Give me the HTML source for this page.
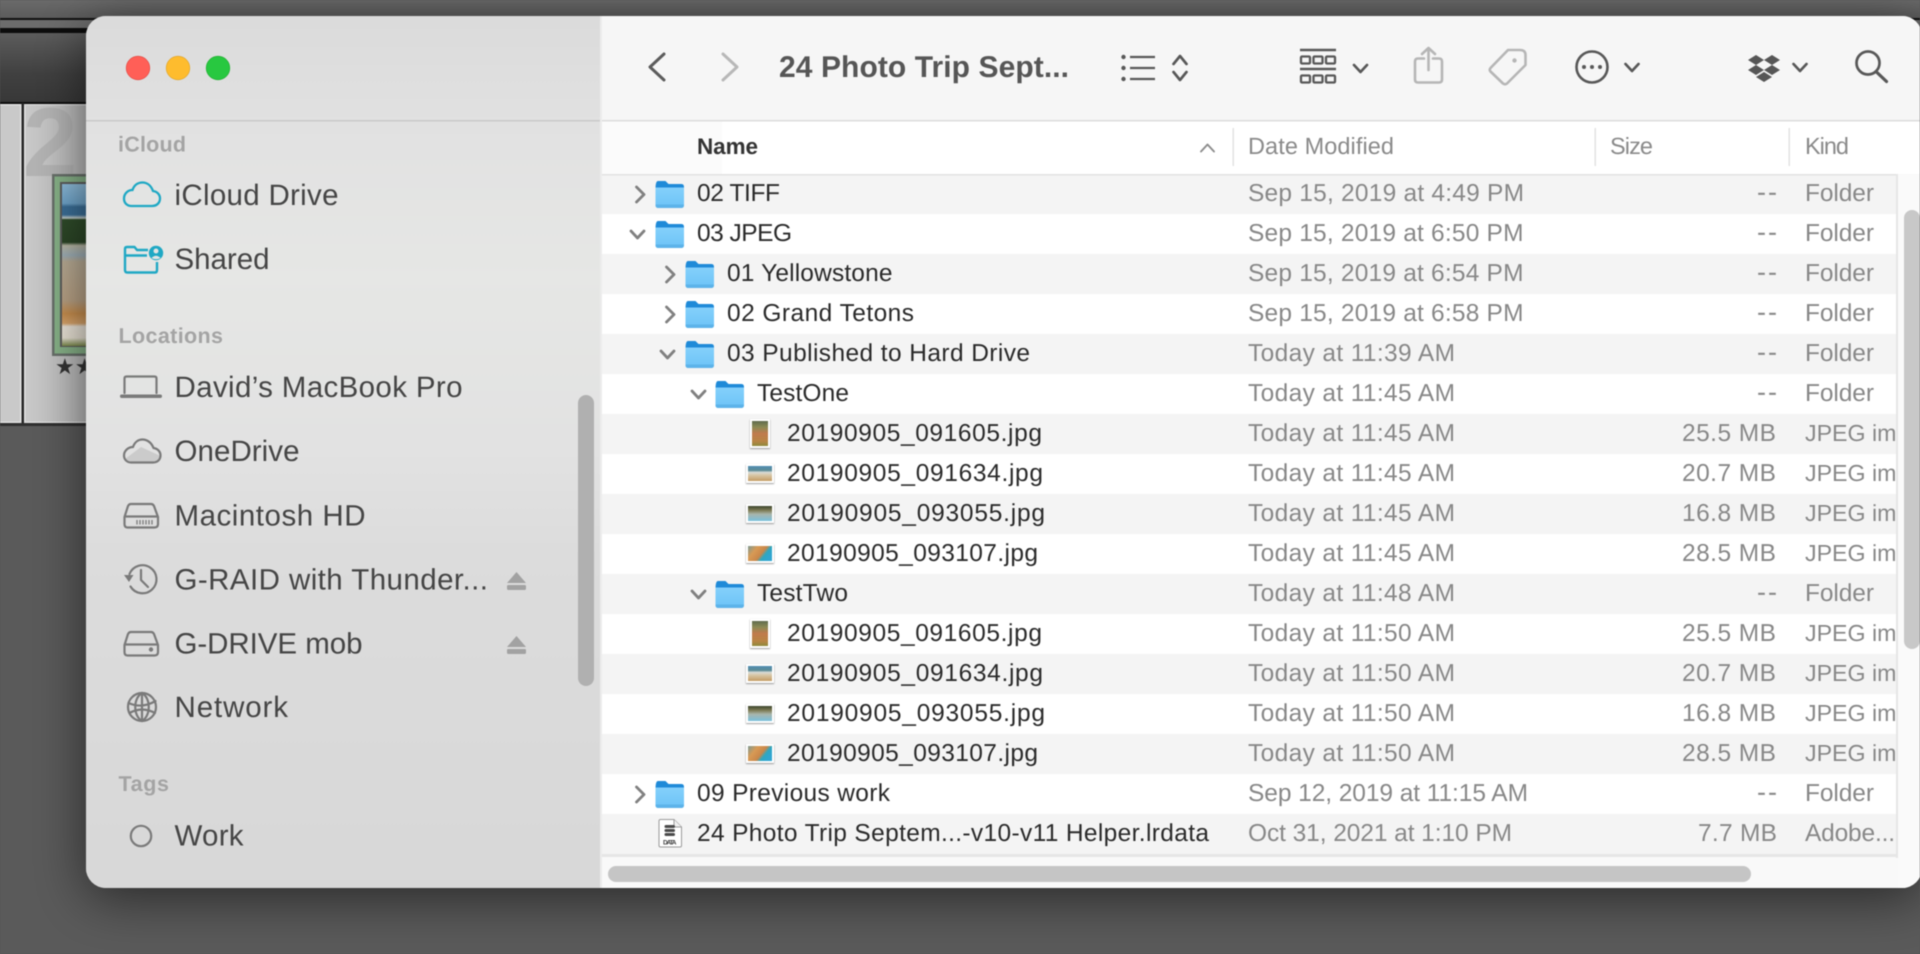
<!DOCTYPE html>
<html lang="en"><head><meta charset="utf-8"><title>Finder</title>
<style>
html,body{margin:0;padding:0;width:1920px;height:954px;overflow:hidden;background:#555}
svg{display:block;filter:blur(.45px)}
text{font-family:"Liberation Sans",sans-serif;text-rendering:geometricPrecision}
.s{font-size:29.5px;fill:#454545}
.h{font-size:21.5px;font-weight:700;fill:#a4a4a4}
.n{font-size:24.5px;fill:#2a2a2a}
.d{font-size:24.5px;fill:#888}
.q{font-size:27px;fill:#888}
.j{font-size:23.2px;fill:#888}
.c{font-size:23.5px;fill:#8a8a8a}
.ic{fill:none;stroke:#7a7a7a;stroke-width:2.2;stroke-linecap:round;stroke-linejoin:round}
.tb{fill:none;stroke:#585858;stroke-width:2.7;stroke-linecap:round;stroke-linejoin:round}
.tg{fill:none;stroke:#b6b6b6;stroke-width:2.6;stroke-linecap:round;stroke-linejoin:round}
.ch{fill:none;stroke:#808080;stroke-width:2.8;stroke-linecap:round;stroke-linejoin:round}
</style></head><body>
<svg width="1920" height="954" viewBox="0 0 1920 954" xmlns="http://www.w3.org/2000/svg">
<defs>
<linearGradient id="bar" x1="0" y1="0" x2="0" y2="1"><stop offset="0" stop-color="#5c5c5c"/><stop offset=".6" stop-color="#404040"/><stop offset="1" stop-color="#383838"/></linearGradient>
<linearGradient id="top" x1="0" y1="0" x2="0" y2="1"><stop offset="0" stop-color="#6a6a6a"/><stop offset="1" stop-color="#5c5c5c"/></linearGradient>
<linearGradient id="cell" x1="0" y1="0" x2="1" y2="0"><stop offset="0" stop-color="#cacaca"/><stop offset="1" stop-color="#b8b8b8"/></linearGradient>
<linearGradient id="side" x1="0" y1="0" x2="0" y2="1"><stop offset="0" stop-color="#dbdbdb"/><stop offset=".14" stop-color="#e2e2e2"/><stop offset=".3" stop-color="#e6e7e5"/><stop offset=".5" stop-color="#e2e2e2"/><stop offset=".62" stop-color="#dcdcdc"/><stop offset="1" stop-color="#d8d8d8"/></linearGradient>
<linearGradient id="ph" x1="0" y1="0" x2="0" y2="1">
<stop offset="0" stop-color="#8fbddc"/><stop offset=".12" stop-color="#6fa5cb"/><stop offset=".14" stop-color="#3b6f98"/><stop offset=".19" stop-color="#3b6f98"/><stop offset=".21" stop-color="#c8d2d0"/><stop offset=".22" stop-color="#2f4c2a"/><stop offset=".36" stop-color="#2b4526"/><stop offset=".38" stop-color="#b9b8a6"/><stop offset=".44" stop-color="#9fb0b8"/><stop offset=".48" stop-color="#b9ac95"/><stop offset=".72" stop-color="#b9a285"/><stop offset=".8" stop-color="#c98f4e"/><stop offset=".86" stop-color="#d9a56c"/><stop offset=".88" stop-color="#ece5da"/><stop offset=".95" stop-color="#e8e2d4"/><stop offset="1" stop-color="#7b8a4a"/></linearGradient>
<linearGradient id="fb" x1="0" y1="0" x2="0" y2="1"><stop offset="0" stop-color="#84d0fb"/><stop offset="1" stop-color="#6cc3f7"/></linearGradient>
<linearGradient id="t1" x1="0" y1="0" x2="0" y2="1"><stop offset="0" stop-color="#5e6b4e"/><stop offset=".25" stop-color="#8c8a55"/><stop offset=".5" stop-color="#c07a4c"/><stop offset=".8" stop-color="#b88444"/><stop offset="1" stop-color="#8f8a3c"/></linearGradient>
<linearGradient id="t2" x1="0" y1="0" x2="0" y2="1"><stop offset="0" stop-color="#4f8db3"/><stop offset=".3" stop-color="#5d8b94"/><stop offset=".42" stop-color="#d9dcd8"/><stop offset=".6" stop-color="#d8c7a8"/><stop offset="1" stop-color="#c49c63"/></linearGradient>
<linearGradient id="t3" x1="0" y1="0" x2="0" y2="1"><stop offset="0" stop-color="#3c452c"/><stop offset=".3" stop-color="#7f7d57"/><stop offset=".55" stop-color="#a8b5ac"/><stop offset="1" stop-color="#79c1dc"/></linearGradient>
<linearGradient id="t4" x1="0" y1="0" x2="1" y2=".5"><stop offset="0" stop-color="#7c9a94"/><stop offset=".35" stop-color="#d89a55"/><stop offset=".65" stop-color="#c9874a"/><stop offset=".8" stop-color="#2fa7c0"/><stop offset="1" stop-color="#30a5d0"/></linearGradient>
<filter id="wsh" x="-10%" y="-10%" width="120%" height="125%"><feDropShadow dx="0" dy="10" stdDeviation="26" flood-color="#000" flood-opacity=".55"/></filter>
<filter id="tsh" x="-30%" y="-30%" width="160%" height="160%"><feDropShadow dx="0" dy=".8" stdDeviation=".8" flood-color="#000" flood-opacity=".45"/></filter>
<clipPath id="win"><rect x="86" y="16" width="1836" height="872" rx="20"/></clipPath>
<clipPath id="kind"><rect x="1800" y="174" width="96" height="684"/></clipPath>
<clipPath id="shot"><rect x="0" y="0" width="86" height="954"/></clipPath>
<g id="f">
<path d="M0 8 Q0 0 2.500 0 H10 L13 3 H26 Q28.500 3 28.500 6 V10 H0Z" fill="#1f8ad8"/>
<path d="M0 6.500 H28.500 V24 Q28.500 27 25.500 27 H3 Q0 27 0 24Z" fill="url(#fb)"/>
<path d="M0 23.500 H28.500 V24 Q28.500 27 25.500 27 H3 Q0 27 0 24Z" fill="#5cb3ea"/>
</g>
<g id="thumbs">
<rect x="750" y="419" width="20" height="29" fill="#fff" filter="url(#tsh)"/><rect x="752" y="421" width="16" height="25" fill="url(#t1)"/>
<rect x="746" y="464" width="28" height="19" fill="#fff" filter="url(#tsh)"/><rect x="748" y="466" width="24" height="15" fill="url(#t2)"/>
<rect x="746" y="504" width="28" height="19" fill="#fff" filter="url(#tsh)"/><rect x="748" y="506" width="24" height="15" fill="url(#t3)"/>
<rect x="746" y="544" width="28" height="19" fill="#fff" filter="url(#tsh)"/><rect x="748" y="546" width="24" height="15" fill="url(#t4)"/>
</g>
<path id="hd" d="M131 1 H151 Q153 1 154 3 L158 14 V21 Q158 24.500 154.500 24.500 H127.500 Q124.500 24.500 124.500 21 V14 L128 3 Q129 1 131 1Z M125 13.500 H157.500"/>
<path id="cr" d="M0 -1 L7.500 6.500 L0 14" />
<path id="cd" d="M0 0 L6.500 7 L13 0" />
<path id="sc" d="M0 0 L6.500 7 L13 0" />
</defs>

<!-- background application -->
<rect width="1920" height="954" fill="#5a5a5a"/>
<rect width="1920" height="18" fill="url(#top)"/>
<rect y="18" width="1920" height="2" fill="#111"/>
<rect y="20" width="1920" height="8" fill="#6c6c6c"/>
<rect y="28" width="1920" height="5" fill="#0c0c0c"/>
<rect y="33" width="1920" height="69" fill="url(#bar)"/>
<rect y="102" width="1920" height="2" fill="#0d0d0d"/>
<g clip-path="url(#shot)">
<rect x="0" y="104" width="21" height="319" fill="#c9c9c9"/>
<rect x="20" y="104" width="1.500" height="319" fill="#e4e4e4"/>
<rect x="0" y="104" width="21" height="1.500" fill="#e0e0e0"/>
<rect x="0" y="421.500" width="21" height="1.500" fill="#e0e0e0"/>
<rect x="21.500" y="103" width="2.500" height="321" fill="#262626"/>
<rect x="24" y="104" width="62" height="319" fill="url(#cell)"/>
<rect x="24" y="104" width="1.500" height="319" fill="#e2e2e2"/>
<rect x="24" y="104" width="62" height="1.500" fill="#d8d8d8"/>
<rect x="24" y="421.500" width="62" height="1.500" fill="#dcdcdc"/>
<rect y="423" width="86" height="3" fill="#2f2f2f"/>
<text x="23" y="176" font-size="98" font-weight="700" fill="#b3b3b3">2</text>
<rect x="52" y="174" width="40" height="182" fill="#68706a"/>
<rect x="54.500" y="176.500" width="40" height="177" fill="#86b187"/>
<rect x="60" y="182" width="30" height="165" fill="#5c5c5c"/>
<rect x="62" y="184" width="30" height="162" fill="url(#ph)"/>
<text x="55" y="374" font-size="22" fill="#333" style="font-family:'DejaVu Sans',sans-serif">★★</text>
</g>
<!-- window -->
<rect x="86" y="16" width="1836" height="872" rx="20" fill="#e0e0e0" filter="url(#wsh)"/>
<g clip-path="url(#win)">
<rect x="86" y="16" width="515" height="872" fill="url(#side)"/>
<rect x="86" y="120" width="515" height="1.500" fill="#c9c9c9"/>
<rect x="600" y="16" width="1320" height="872" fill="#f9f9f9"/>
<rect x="600" y="16" width="1320" height="104" fill="#f6f6f6"/>
<rect x="600" y="16" width="2" height="872" fill="#ececec"/>
<rect x="602" y="120" width="1318" height="1.500" fill="#dcdcdc"/>
<rect x="602" y="121.500" width="1318" height="52.500" fill="#fff"/>
<rect x="602" y="121.500" width="120" height="52.500" fill="#fbfbfb"/>
<rect x="602" y="174" width="1294" height="680" fill="#fff"/>
<g fill="#f4f4f4">
<rect x="602" y="174" width="1294" height="40"/><rect x="602" y="254" width="1294" height="40"/><rect x="602" y="334" width="1294" height="40"/><rect x="602" y="414" width="1294" height="40"/><rect x="602" y="494" width="1294" height="40"/><rect x="602" y="574" width="1294" height="40"/><rect x="602" y="654" width="1294" height="40"/><rect x="602" y="734" width="1294" height="40"/><rect x="602" y="814" width="1294" height="40"/>
</g>
<rect x="602" y="174" width="1296" height="1.500" fill="#e2e2e2"/>
<rect x="1896" y="174" width="2" height="684" fill="#e6e6e6"/>
<rect x="602" y="854" width="1296" height="3" fill="#e6e6e6"/>
<rect x="1898" y="175" width="22" height="713" fill="#fafafa"/>
<rect x="1904" y="210" width="16" height="439" rx="8" fill="#c8c8c8"/>
<rect x="608" y="866" width="1143" height="16" rx="8" fill="#c5c5c5"/>
<rect x="578" y="395" width="16" height="291" rx="8" fill="#b0b0b0"/>

<!-- traffic lights -->
<circle cx="138" cy="68" r="11.800" fill="#ff5f57" stroke="#e0443e" stroke-width=".6"/>
<circle cx="178" cy="68" r="11.800" fill="#febc2e" stroke="#dea123" stroke-width=".6"/>
<circle cx="218" cy="68" r="11.800" fill="#28c840" stroke="#1aab29" stroke-width=".6"/>

<!-- sidebar text -->
<text class="h" x="118" y="151.500" textLength="68">iCloud</text>
<text class="s" x="174.500" y="205" textLength="164">iCloud Drive</text>
<text class="s" x="174.500" y="269" textLength="95">Shared</text>
<text class="h" x="118.500" y="343" textLength="104.500">Locations</text>
<text class="s" x="174.500" y="397" textLength="288">David’s MacBook Pro</text>
<text class="s" x="174.500" y="461" textLength="125">OneDrive</text>
<text class="s" x="174.500" y="525.500" textLength="191">Macintosh HD</text>
<text class="s" x="174.500" y="589.500" textLength="313.500">G-RAID with Thunder...</text>
<text class="s" x="174.500" y="653.500" textLength="188">G-DRIVE mob</text>
<text class="s" x="174.500" y="717" textLength="113.500">Network</text>
<text class="h" x="118.500" y="791" textLength="50.500">Tags</text>
<text class="s" x="174.500" y="845.500" textLength="69">Work</text>

<!-- sidebar icons -->
<path d="M131.500 206 H152 C157 206 160 202.500 160 198.500 C160 194.500 157 191.500 153 191 C151 185.500 147 182.500 142.500 182.500 C137.500 182.500 134 185.500 132.500 190 C127.500 190 124 194 124 198.500 C124 203 127 206 131.500 206Z" fill="none" stroke="#1fa8c4" stroke-width="2.300"/>
<path d="M148 250 H137 L134.500 247 H127 Q125 247 125 249 V270 Q125 272.500 127.500 272.500 H155 Q157 272.500 157 270 V262 M125 255.500 H147" fill="none" stroke="#1fa8c4" stroke-width="2.400" stroke-linejoin="round"/>
<circle cx="156" cy="253" r="7.200" fill="#1fa8c4"/><circle cx="156" cy="251" r="2.500" fill="#e2e4e3"/><path d="M151.500 258 Q156 253.500 160.500 258 Q156 260.500 151.500 258Z" fill="#e2e4e3"/>
<path class="ic" d="M124.500 393 V378.500 Q124.500 376.500 126.500 376.500 H154.500 Q156.500 376.500 156.500 378.500 V393"/>
<rect x="120" y="394.500" width="42" height="3.500" rx="1.700" fill="#7a7a7a"/>
<path d="M131 463 H153 C157.500 463 160.500 460 160.500 456 L141 447 L125 459 C126.500 461.500 128.500 463 131 463Z" fill="#cbcbcb"/>
<path class="ic" d="M131 462.500 H153 C157.500 462.500 160.500 459.500 160.500 455.500 C160.500 451.500 157.500 448.500 153.500 448 C151.500 442.500 147 439.500 142.500 439.500 C138 439.500 134.500 442.500 133 447 C128 447 124 451 124 455.500 C124 459.500 127 462.500 131 462.500Z"/>
<use href="#hd" class="ic" y="503"/>
<path d="M137 520 v4.500 M140 520 v4.500 M143 520 v4.500 M146 520 v4.500 M149 520 v4.500 M152 520 v4.500" stroke="#7a7a7a" stroke-width="1.300" fill="none"/>
<path class="ic" d="M129.500 574 A14 14 0 1 1 130.500 586.500"/><path class="ic" d="M141 570 V580 L148 587"/>
<polygon points="124,575 133.500,575 129,582" fill="#7a7a7a"/>
<use href="#hd" class="ic" y="631"/>
<circle cx="151" cy="649.500" r="2.200" fill="#7a7a7a"/>
<g class="ic" stroke-width="1.900"><circle cx="142" cy="707" r="14"/><path d="M142 693 C133 698 133 716 142 721 M142 693 C151 698 151 716 142 721 M142 693 V721 M128.500 703 Q142 709 155.500 701 M129.500 713 Q142 706 155 713"/></g>
<circle cx="141" cy="836" r="10.200" fill="none" stroke="#7a7a7a" stroke-width="2.200"/>
<g fill="#a2a2a2"><polygon points="516.500,572 526,583 507,583"/><rect x="507" y="585" width="19" height="5" rx="1.200"/><polygon points="516.500,636 526,647 507,647"/><rect x="507" y="649" width="19" height="5" rx="1.200"/></g>

<!-- toolbar -->
<path d="M664 54 L650 67 L664 80" fill="none" stroke="#5c5c5c" stroke-width="3" stroke-linecap="round" stroke-linejoin="round"/>
<path d="M723 54 L737 67 L723 80" fill="none" stroke="#b8b8b8" stroke-width="3" stroke-linecap="round" stroke-linejoin="round"/>
<text x="779" y="77" font-size="30" font-weight="700" fill="#565656" textLength="290">24 Photo Trip Sept...</text>
<g fill="#585858"><circle cx="1123.500" cy="57" r="2.200"/><circle cx="1123.500" cy="68" r="2.200"/><circle cx="1123.500" cy="79" r="2.200"/></g>
<path d="M1130 57 H1155 M1130 68 H1155 M1130 79 H1155" stroke="#585858" stroke-width="2.300" fill="none"/>
<path class="tb" d="M1173.500 64 L1180 56 L1186.500 64 M1173.500 72 L1180 80 L1186.500 72"/>
<g fill="none" stroke="#585858" stroke-width="2.300"><path d="M1300 50 H1336 M1300 69 H1336" stroke-width="2.400"/><rect x="1301" y="56.500" width="9" height="7" rx="1"/><rect x="1313.500" y="56.500" width="9" height="7" rx="1"/><rect x="1326" y="56.500" width="9" height="7" rx="1"/><rect x="1301" y="75.500" width="9" height="7" rx="1"/><rect x="1313.500" y="75.500" width="9" height="7" rx="1"/><rect x="1326" y="75.500" width="9" height="7" rx="1"/></g>
<use href="#sc" class="tb" x="1354" y="65"/>
<path class="tg" d="M1424 58.500 H1418 Q1415 58.500 1415 61.500 V79.500 Q1415 82.500 1418 82.500 H1439 Q1442 82.500 1442 79.500 V61.500 Q1442 58.500 1439 58.500 H1433 M1428.500 48 V70 M1422 54 L1428.500 48 L1435 54"/>
<path class="tg" d="M1508 50 H1520 Q1525.500 50 1525.500 55 V65 L1507 83.500 Q1505 85 1503 83.500 L1490.500 71.500 Q1489 70 1490.500 68 Z"/>
<circle cx="1514.500" cy="60.500" r="2.200" fill="#b6b6b6"/>
<circle cx="1592" cy="67" r="15.500" fill="none" stroke="#585858" stroke-width="2.600"/>
<g fill="#585858"><circle cx="1584" cy="67" r="2"/><circle cx="1592" cy="67" r="2"/><circle cx="1600" cy="67" r="2"/></g>
<use href="#sc" class="tb" x="1625.500" y="64"/>
<g fill="#565656"><polygon points="1756,55 1764,60 1756,65 1748,60"/><polygon points="1772,55 1780,60 1772,65 1764,60"/><polygon points="1756,65 1764,70 1756,75 1748,70"/><polygon points="1772,65 1780,70 1772,75 1764,70"/><polygon points="1764,72 1772,77 1764,82 1756,77"/></g>
<use href="#sc" class="tb" x="1793.500" y="64"/>
<circle cx="1868" cy="63" r="11.500" fill="none" stroke="#585858" stroke-width="2.700"/>
<path d="M1876.500 72 L1886.500 81.500" stroke="#585858" stroke-width="3.200" stroke-linecap="round"/>

<!-- column header -->
<text x="697" y="154" font-size="22.500" font-weight="700" fill="#333" textLength="61">Name</text>
<path d="M1201 151.500 L1207.500 144.500 L1214 151.500" fill="none" stroke="#8c8c8c" stroke-width="1.900" stroke-linecap="round" stroke-linejoin="round"/>
<rect x="1232.500" y="128" width="1.500" height="38" fill="#e2e2e2"/>
<text class="c" x="1248" y="154" textLength="146">Date Modified</text>
<rect x="1594.500" y="128" width="1.500" height="38" fill="#e2e2e2"/>
<text class="c" x="1610" y="154" textLength="43">Size</text>
<rect x="1788.500" y="128" width="1.500" height="38" fill="#e2e2e2"/>
<text class="c" x="1805" y="154" textLength="44">Kind</text>

<!-- disclosure triangles -->
<g class="ch">
<use href="#cr" x="636.500" y="188"/>
<use href="#cd" x="631" y="231"/>
<use href="#cr" x="666.500" y="268"/>
<use href="#cr" x="666.500" y="308"/>
<use href="#cd" x="661" y="351"/>
<use href="#cd" x="692" y="391"/>
<use href="#cd" x="692" y="591"/>
<use href="#cr" x="636.500" y="788"/>
</g>
<!-- folders -->
<use href="#f" x="655.500" y="181"/><use href="#f" x="655.500" y="221"/>
<use href="#f" x="685.500" y="261"/><use href="#f" x="685.500" y="301"/><use href="#f" x="685.500" y="341"/>
<use href="#f" x="715.500" y="381"/><use href="#f" x="715.500" y="581"/>
<use href="#f" x="655.500" y="781"/>
<use href="#thumbs"/><use href="#thumbs" y="200"/>
<path d="M659 821 Q659 819.500 660.500 819.500 H674 L681.500 827 V845.500 Q681.500 847 680 847 H660.500 Q659 847 659 845.500Z" fill="#fff" stroke="#9a9a9a" stroke-width="1"/>
<path d="M674 819.500 V827 H681.500" fill="#f0f0f0" stroke="#9a9a9a" stroke-width="1"/>
<g fill="#4a4a4a"><rect x="664.500" y="825" width="10.500" height="3" rx="1.500"/><rect x="664.500" y="829" width="10.500" height="3" rx="1.500"/><rect x="664.500" y="833" width="10.500" height="3" rx="1.500"/></g>
<text x="663" y="844.500" font-size="6.500" font-weight="700" fill="#444" textLength="13.500">DATA</text>

<!-- names -->
<text class="n" x="697" y="201" textLength="83">02 TIFF</text>
<text class="n" x="697" y="241" textLength="95">03 JPEG</text>
<text class="n" x="727" y="281" textLength="165.500">01 Yellowstone</text>
<text class="n" x="727" y="321" textLength="187">02 Grand Tetons</text>
<text class="n" x="727" y="361" textLength="303">03 Published to Hard Drive</text>
<text class="n" x="757" y="401" textLength="92">TestOne</text>
<text class="n" x="787" y="441" textLength="255">20190905_091605.jpg</text>
<text class="n" x="787" y="481" textLength="256">20190905_091634.jpg</text>
<text class="n" x="787" y="521" textLength="258">20190905_093055.jpg</text>
<text class="n" x="787" y="561" textLength="251">20190905_093107.jpg</text>
<text class="n" x="757" y="601" textLength="91">TestTwo</text>
<text class="n" x="787" y="641" textLength="255">20190905_091605.jpg</text>
<text class="n" x="787" y="681" textLength="256">20190905_091634.jpg</text>
<text class="n" x="787" y="721" textLength="258">20190905_093055.jpg</text>
<text class="n" x="787" y="761" textLength="251">20190905_093107.jpg</text>
<text class="n" x="697" y="801" textLength="193">09 Previous work</text>
<text class="n" x="697" y="841" textLength="512">24 Photo Trip Septem...-v10-v11 Helper.lrdata</text>

<!-- dates -->
<text class="d" x="1248" y="201" textLength="276">Sep 15, 2019 at 4:49 PM</text>
<text class="d" x="1248" y="241" textLength="275.500">Sep 15, 2019 at 6:50 PM</text>
<text class="d" x="1248" y="281" textLength="275.500">Sep 15, 2019 at 6:54 PM</text>
<text class="d" x="1248" y="321" textLength="275.500">Sep 15, 2019 at 6:58 PM</text>
<text class="d" x="1248" y="361" textLength="207">Today at 11:39 AM</text>
<text class="d" x="1248" y="401" textLength="207">Today at 11:45 AM</text>
<text class="d" x="1248" y="441" textLength="207">Today at 11:45 AM</text>
<text class="d" x="1248" y="481" textLength="207">Today at 11:45 AM</text>
<text class="d" x="1248" y="521" textLength="207">Today at 11:45 AM</text>
<text class="d" x="1248" y="561" textLength="207">Today at 11:45 AM</text>
<text class="d" x="1248" y="601" textLength="207">Today at 11:48 AM</text>
<text class="d" x="1248" y="641" textLength="207">Today at 11:50 AM</text>
<text class="d" x="1248" y="681" textLength="207">Today at 11:50 AM</text>
<text class="d" x="1248" y="721" textLength="207">Today at 11:50 AM</text>
<text class="d" x="1248" y="761" textLength="207">Today at 11:50 AM</text>
<text class="d" x="1248" y="801" textLength="280">Sep 12, 2019 at 11:15 AM</text>
<text class="d" x="1248" y="841" textLength="264">Oct 31, 2021 at 1:10 PM</text>

<!-- sizes -->
<text class="q" x="1757" y="201" textLength="20">--</text>
<text class="q" x="1757" y="241" textLength="20">--</text>
<text class="q" x="1757" y="281" textLength="20">--</text>
<text class="q" x="1757" y="321" textLength="20">--</text>
<text class="q" x="1757" y="361" textLength="20">--</text>
<text class="q" x="1757" y="401" textLength="20">--</text>
<text class="d" x="1682" y="441" textLength="94">25.5 MB</text>
<text class="d" x="1682" y="481" textLength="94">20.7 MB</text>
<text class="d" x="1682" y="521" textLength="94">16.8 MB</text>
<text class="d" x="1682" y="561" textLength="94">28.5 MB</text>
<text class="q" x="1757" y="601" textLength="20">--</text>
<text class="d" x="1682" y="641" textLength="94">25.5 MB</text>
<text class="d" x="1682" y="681" textLength="94">20.7 MB</text>
<text class="d" x="1682" y="721" textLength="94">16.8 MB</text>
<text class="d" x="1682" y="761" textLength="94">28.5 MB</text>
<text class="q" x="1757" y="801" textLength="20">--</text>
<text class="d" x="1698" y="841" textLength="79">7.7 MB</text>

<!-- kinds -->
<g clip-path="url(#kind)">
<text class="d" x="1805" y="201" textLength="69">Folder</text>
<text class="d" x="1805" y="241" textLength="69">Folder</text>
<text class="d" x="1805" y="281" textLength="69">Folder</text>
<text class="d" x="1805" y="321" textLength="69">Folder</text>
<text class="d" x="1805" y="361" textLength="69">Folder</text>
<text class="d" x="1805" y="401" textLength="69">Folder</text>
<text class="j" x="1805" y="441">JPEG image</text>
<text class="j" x="1805" y="481">JPEG image</text>
<text class="j" x="1805" y="521">JPEG image</text>
<text class="j" x="1805" y="561">JPEG image</text>
<text class="d" x="1805" y="601" textLength="69">Folder</text>
<text class="j" x="1805" y="641">JPEG image</text>
<text class="j" x="1805" y="681">JPEG image</text>
<text class="j" x="1805" y="721">JPEG image</text>
<text class="j" x="1805" y="761">JPEG image</text>
<text class="d" x="1805" y="801" textLength="69">Folder</text>
<text class="d" x="1805" y="841" textLength="90">Adobe...</text>
</g>
</g>
</svg>
</body></html>
